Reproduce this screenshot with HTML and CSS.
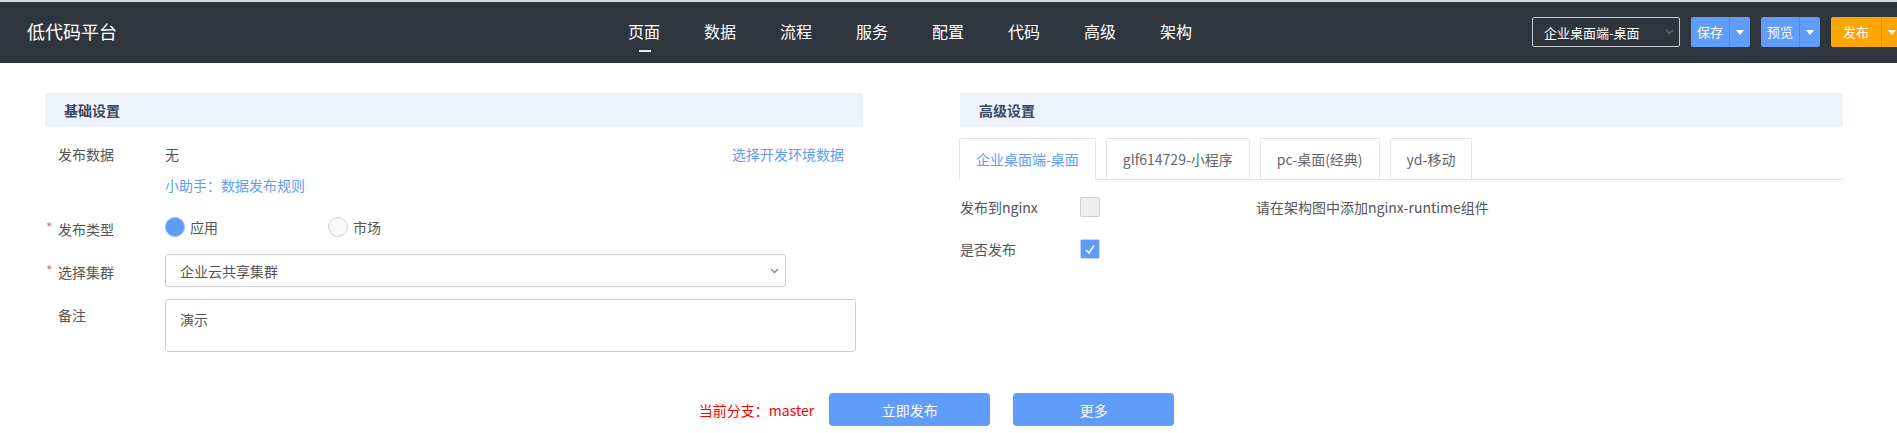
FILE: index.html
```html
<!DOCTYPE html>
<html lang="zh-CN">
<head>
    <meta charset="UTF-8">
    <meta name="viewport" content="width=device-width, initial-scale=1.0">
    <title>低代码平台 - 发布</title>
    <link rel="stylesheet" href="styles.css">
</head>
<body>
    <div class="topbar">
        <div class="logo">低代码平台</div>
        <nav class="nav">
            <a class="nav-item active">页面</a>
            <a class="nav-item">数据</a>
            <a class="nav-item">流程</a>
            <a class="nav-item">服务</a>
            <a class="nav-item">配置</a>
            <a class="nav-item">代码</a>
            <a class="nav-item">高级</a>
            <a class="nav-item">架构</a>
        </nav>
        <div class="toolbar">
            <div class="env-select">
                <span>企业桌面端-桌面</span>
                <svg class="chevron" width="9" height="6" viewBox="0 0 9 6"><polyline points="1,1 4.5,4.5 8,1" fill="none" stroke="#666" stroke-width="1.4"/></svg>
            </div>
            <div class="split-btn blue"><span class="btn-main">保存</span><span class="btn-caret"><i></i></span></div>
            <div class="split-btn blue"><span class="btn-main">预览</span><span class="btn-caret"><i></i></span></div>
            <div class="split-btn orange"><span class="btn-main wide">发布</span><span class="btn-caret"><i></i></span></div>
        </div>
    </div>

    <div class="main">
        <!-- 基础设置 -->
        <section class="panel basic">
            <div class="panel-title">基础设置</div>

            <div class="form-row row-data">
                <div class="form-label">发布数据</div>
                <div class="form-value">无</div>
                <a class="link env-link">选择开发环境数据</a>
            </div>
            <div class="form-row row-help">
                <a class="link">小助手：数据发布规则</a>
            </div>
            <div class="form-row row-type">
                <div class="form-label required">发布类型</div>
                <label class="radio checked"><span class="radio-dot"></span>应用</label>
                <label class="radio"><span class="radio-dot"></span>市场</label>
            </div>
            <div class="form-row row-cluster">
                <div class="form-label tall required">选择集群</div>
                <div class="select-box">
                    <span>企业云共享集群</span>
                    <svg class="chevron" width="9" height="6" viewBox="0 0 9 6"><polyline points="1,1 4.5,4.5 8,1" fill="none" stroke="#888" stroke-width="1.3"/></svg>
                </div>
            </div>
            <div class="form-row row-remark">
                <div class="form-label tall">备注</div>
                <div class="textarea-box">演示</div>
            </div>
        </section>

        <!-- 高级设置 -->
        <section class="panel advanced">
            <div class="panel-title">高级设置</div>

            <div class="tabs">
                <div class="tab active">企业桌面端-桌面</div>
                <div class="tab">glf614729-小程序</div>
                <div class="tab">pc-桌面(经典)</div>
                <div class="tab">yd-移动</div>
            </div>

            <div class="check-row first">
                <div class="check-label">发布到nginx</div>
                <span class="checkbox"></span>
                <span class="hint">请在架构图中添加nginx-runtime组件</span>
            </div>
            <div class="check-row">
                <div class="check-label">是否发布</div>
                <span class="checkbox checked">
                    <svg width="12" height="11" viewBox="0 0 12 11"><polyline points="2,6 5,9 10,1.5" fill="none" stroke="#fff" stroke-width="1.6"/></svg>
                </span>
            </div>
        </section>
    </div>

    <div class="footer-actions">
        <span class="branch">当前分支：master</span>
        <button class="action-btn">立即发布</button>
        <button class="action-btn">更多</button>
    </div>
</body>
</html>
```

FILE: styles.css
```css
body {
    margin: 0;
    width: 1897px;
    overflow: hidden;
    background-color: #fff;
    font-family: "Microsoft YaHei", "Noto Sans CJK SC", sans-serif;
    font-size: 14px;
    color: #555;
}

/* 顶部导航 */
.topbar {
    display: flex;
    align-items: flex-start;
    height: 61px;
    border-top: 2px solid #d9dadc;
    background-color: #2f353d;
    overflow: hidden;
}
.logo {
    flex-shrink: 0;
    padding-left: 27px;
    line-height: 58px;
    font-size: 18px;
    color: #fff;
}
.nav {
    display: flex;
    flex-shrink: 0;
    margin-left: 489px;
}
.nav-item {
    position: relative;
    width: 32px;
    padding: 0 22px;
    line-height: 58px;
    font-size: 16px;
    color: #fff;
    text-align: center;
}
.nav-item.active::after {
    content: "";
    position: absolute;
    left: 33px;
    top: 48px;
    width: 12px;
    height: 2px;
    background-color: #e8e8e8;
}
.toolbar {
    display: flex;
    flex-shrink: 0;
    gap: 11px;
    margin-left: 318px;
    margin-top: 15px;
}
.env-select {
    display: flex;
    align-items: center;
    justify-content: space-between;
    box-sizing: border-box;
    width: 148px;
    height: 30px;
    padding: 0 5px 0 11px;
    border: 1px solid #c8cbd0;
    border-radius: 2px;
    font-size: 13px;
    color: #fff;
}
.split-btn {
    display: flex;
    flex-shrink: 0;
    height: 30px;
    border-radius: 2px;
    font-size: 13px;
    color: #fff;
}
.split-btn.blue {
    background-color: #609cf9;
}
.split-btn.orange {
    background-color: #ffa500;
}
.btn-main {
    width: 38px;
    line-height: 30px;
    text-align: center;
}
.btn-main.wide {
    width: 50px;
}
.btn-caret {
    display: flex;
    align-items: center;
    justify-content: center;
    width: 20px;
    border-left: 1px solid rgba(0, 0, 0, 0.12);
}
.btn-caret i {
    width: 0;
    height: 0;
    border-left: 4px solid transparent;
    border-right: 4px solid transparent;
    border-top: 5px solid #fff;
}

/* 主体 */
.main {
    display: flex;
    padding: 30px 54px 0 45px;
    gap: 97px;
}
.panel.basic {
    width: 818px;
    flex-shrink: 0;
}
.panel.advanced {
    flex: 1;
}
.panel-title {
    height: 34px;
    line-height: 34px;
    padding-left: 19px;
    background-color: #eef3fb;
    font-weight: bold;
    color: #3a4760;
}

.form-row {
    display: flex;
    align-items: flex-start;
}
.form-label {
    width: 107px;
    padding-left: 13px;
    line-height: 20px;
    flex-shrink: 0;
}
.form-label.tall {
    line-height: 33px;
}
.form-label.required::before {
    content: "*";
    display: inline-block;
    width: 12px;
    margin-left: -12px;
    color: #f56c6c;
    vertical-align: 2px;
}
.form-value {
    line-height: 20px;
}
.link {
    color: #5f9cf8;
    line-height: 20px;
    cursor: pointer;
}
.env-link {
    margin-left: auto;
    margin-right: 19px;
}
.row-data {
    margin-top: 17px;
}
.row-help {
    margin-top: 11px;
    padding-left: 120px;
}
.row-type {
    margin-top: 22px;
}
.row-cluster {
    margin-top: 15px;
}
.row-remark {
    margin-top: 10px;
}

.radio {
    display: flex;
    align-items: center;
    gap: 5px;
    width: 163px;
    line-height: 20px;
    color: #555;
}
.radio-dot {
    box-sizing: border-box;
    width: 20px;
    height: 20px;
    border-radius: 50%;
    border: 1px solid #d4d4d4;
    background-color: #f8f8f8;
}
.radio.checked .radio-dot {
    border-color: #8fb8f6;
    background-color: #5f9cf8;
}

.select-box {
    display: flex;
    align-items: center;
    justify-content: space-between;
    box-sizing: border-box;
    width: 621px;
    height: 33px;
    padding: 0 6px 0 14px;
    border: 1px solid #d0d0d0;
    border-radius: 3px;
}
.textarea-box {
    box-sizing: border-box;
    width: 691px;
    height: 53px;
    padding: 9px 14px;
    line-height: 20px;
    border: 1px solid #d0d0d0;
    border-radius: 3px;
}

/* 高级设置 tabs */
.tabs {
    display: flex;
    margin-top: 11px;
    border-bottom: 1px solid #dfe4ed;
}
.tab {
    box-sizing: border-box;
    height: 41px;
    line-height: 40px;
    padding: 0 16px;
    margin-right: 10px;
    border: 1px solid #dfe4ed;
    border-bottom: none;
    border-radius: 2px 2px 0 0;
    color: #666;
}
.tab:first-child {
    margin-left: -1px;
}
.tab.active {
    height: 42px;
    margin-bottom: -1px;
    background-color: #fff;
    color: #5f9cf8;
}

.check-row {
    display: flex;
    align-items: center;
    height: 20px;
    margin-top: 22px;
}
.check-row.first {
    margin-top: 17px;
}
.check-label {
    width: 120px;
    flex-shrink: 0;
}
.checkbox {
    display: flex;
    align-items: center;
    justify-content: center;
    box-sizing: border-box;
    width: 20px;
    height: 20px;
    border: 1px solid #d0d0d0;
    border-radius: 2px;
    background-color: #eee;
}
.checkbox.checked {
    border-color: #c6d6ef;
    background-color: #5f9cf8;
}
.hint {
    margin-left: 156px;
}

/* 底部按钮 */
.footer-actions {
    display: flex;
    align-items: center;
    justify-content: center;
    margin-top: 41px;
    padding-right: 24px;
}
.branch {
    margin-right: 15px;
    color: #f00;
}
.action-btn {
    width: 161px;
    height: 33px;
    margin-right: 23px;
    border: none;
    border-radius: 4px;
    background-color: #609cf9;
    font-family: inherit;
    font-size: 14px;
    color: #fff;
}
.action-btn:last-child {
    margin-right: 0;
}
```
